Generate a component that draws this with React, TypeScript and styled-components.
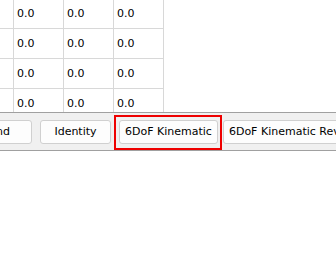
import React, { FC } from "react"
import styled, { createGlobalStyle } from "styled-components"

const GlobalStyle = createGlobalStyle`
    html, body {
        margin: 0;
        padding: 0;
        background: #ffffff;
    }
    body {
        font-family: "DejaVu Sans", Verdana, sans-serif;
        font-size: 11px;
        color: #000000;
    }
`

// first column is scrolled out of view, only its right edge shows
const rows = [
    ["", "0.0", "0.0", "0.0"],
    ["", "0.0", "0.0", "0.0"],
    ["", "0.0", "0.0", "0.0"],
    ["", "0.0", "0.0", "0.0"],
]

const buttons = [
    { label: "Land" },
    { label: "Identity" },
    { label: "6DoF Kinematic", selected: true },
    { label: "6DoF Kinematic Reverse" },
]

const Grid: FC = () => (
    <GridViewport>
        <GridBody>
            {rows.map((row, r) => (
                <GridRow key={r}>
                    {row.map((v, c) => <Cell key={c}>{v}</Cell>)}
                </GridRow>
            ))}
        </GridBody>
    </GridViewport>
)

const Toolbar: FC = () => (
    <ToolbarWrapper>
        <ButtonStrip>
            {buttons.map((b, i) => (
                <PushButton key={i} $selected={b.selected}>{b.label}</PushButton>
            ))}
        </ButtonStrip>
    </ToolbarWrapper>
)

export default function App() {
    return <>
        <GlobalStyle />
        <Page>
            <Grid />
            <Toolbar />
            <Blank />
        </Page>
    </>
}

const Page = styled.div`
    width: 336px;
    height: 264px;
    display: flex;
    flex-direction: column;
    overflow: hidden;
    background: #ffffff;
`

const GridViewport = styled.div`
    height: 112px;
    overflow: hidden;
    background: #ffffff;
`

const GridBody = styled.div`
    display: flex;
    flex-direction: column;
    width: 200px;
    margin-top: -1px;
    margin-left: -36px;
    background: #ffffff;
`

const GridRow = styled.div`
    display: flex;
    height: 30px;
    box-sizing: border-box;
    border-bottom: 1px solid #d8d8d8;
`

const Cell = styled.div`
    width: 50px;
    box-sizing: border-box;
    border-right: 1px solid #d8d8d8;
    padding-left: 3px;
    display: flex;
    align-items: center;
    font-size: 11px;
    color: #000000;
`

const ToolbarWrapper = styled.div`
    height: 39px;
    box-sizing: border-box;
    border-top: 1px solid #a0a0a0;
    border-bottom: 1px solid #a0a0a0;
    background: #f0f0f0;
    display: flex;
    align-items: center;
    overflow: hidden;
`

const ButtonStrip = styled.div`
    display: flex;
    gap: 8px;
    margin-left: -39px;
    flex-shrink: 0;
`

const PushButton = styled.div<{ $selected?: boolean }>`
    position: relative;
    height: 24px;
    min-width: 71px;
    box-sizing: border-box;
    padding: 0 5px;
    display: flex;
    align-items: center;
    justify-content: center;
    white-space: nowrap;
    flex-shrink: 0;
    background: #fdfdfd;
    border: 1px solid #d0d0d0;
    border-radius: 3px;
    font-size: 11px;
    color: #000000;
    margin-right: ${p => p.$selected ? "-3px" : "0"};

    &::after {
        content: "";
        display: ${p => p.$selected ? "block" : "none"};
        position: absolute;
        top: -6px;
        left: -6px;
        right: -5px;
        bottom: -7px;
        border: 2px solid #ee0000;
    }
`

const Blank = styled.div`
    flex: 1;
    background: #ffffff;
`
